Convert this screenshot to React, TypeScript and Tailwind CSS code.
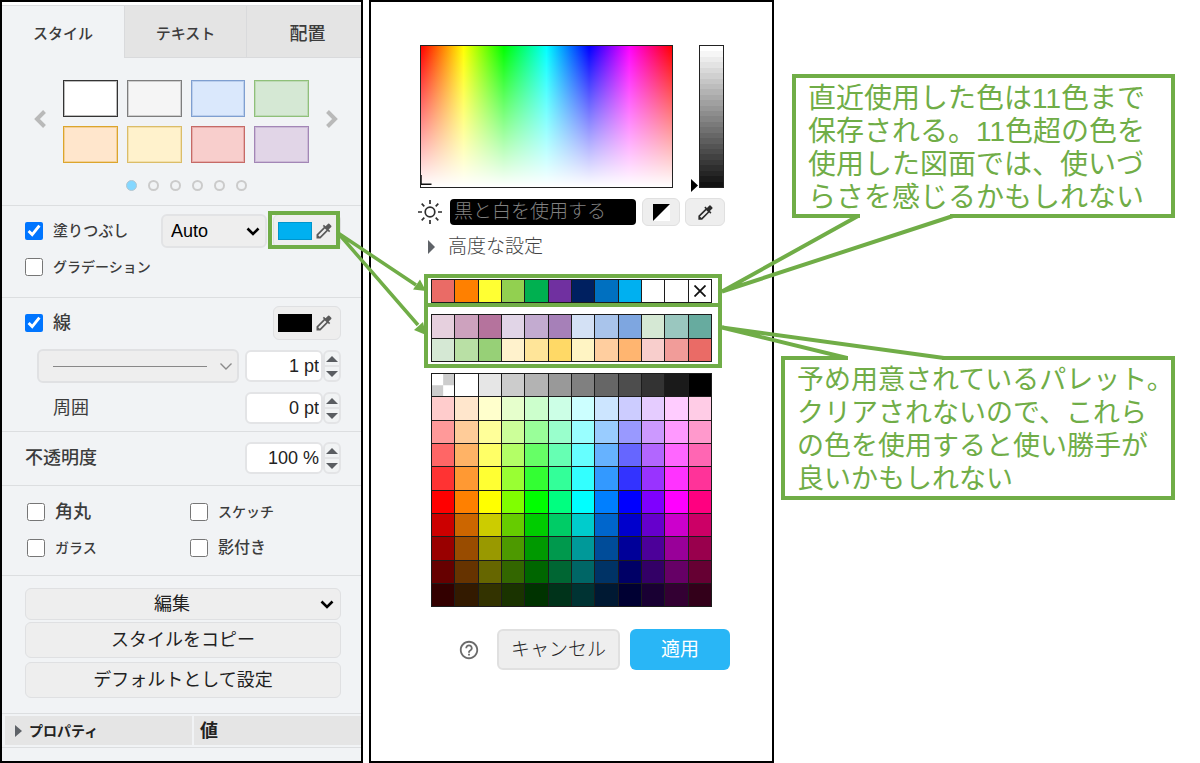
import React from "react";
import { MdHelpOutline } from "react-icons/md";

const STYLE_PRESETS = [
  { fill: "#ffffff", stroke: "#333333" },
  { fill: "#f5f5f5", stroke: "#7d7d7d" },
  { fill: "#dae8fc", stroke: "#7f9fd0" },
  { fill: "#d5e8d4", stroke: "#8fc07a" },
  { fill: "#ffe6cc", stroke: "#dca52c" },
  { fill: "#fff2cc", stroke: "#dbbd68" },
  { fill: "#f8cecc", stroke: "#c66a66" },
  { fill: "#e1d5e7", stroke: "#a386b6" },
];

const RECENT = "EA6B66 FF8000 FFFF33 92D050 00B050 7030A0 002060 0070C0 00B0F0 FFFFFF FFFFFF none".split(" ");

const PRESET = (
  "E6D0DE CDA2BE B5739D E1D5E7 C3ABD0 A680B8 D4E1F5 A9C4EB 7EA6E0 D5E8D4 9AC7BF 67AB9F " +
  "D5E8D4 B9E0A5 97D077 FFF2CC FFE599 FFD966 FFF4C3 FFCE9F FFB570 F8CECC F19C99 EA6B66"
).split(" ");

const DEFAULTS = (
  "clear FFFFFF E6E6E6 CCCCCC B3B3B3 999999 808080 666666 4D4D4D 333333 1A1A1A 000000 " +
  "FFCCCC FFE6CC FFFFCC E6FFCC CCFFCC CCFFE6 CCFFFF CCE5FF CCCCFF E5CCFF FFCCFF FFCCE6 " +
  "FF9999 FFCC99 FFFF99 CCFF99 99FF99 99FFCC 99FFFF 99CCFF 9999FF CC99FF FF99FF FF99CC " +
  "FF6666 FFB366 FFFF66 B3FF66 66FF66 66FFB3 66FFFF 66B2FF 6666FF B266FF FF66FF FF66B3 " +
  "FF3333 FF9933 FFFF33 99FF33 33FF33 33FF99 33FFFF 3399FF 3333FF 9933FF FF33FF FF3399 " +
  "FF0000 FF8000 FFFF00 80FF00 00FF00 00FF80 00FFFF 007FFF 0000FF 7F00FF FF00FF FF0080 " +
  "CC0000 CC6600 CCCC00 66CC00 00CC00 00CC66 00CCCC 0066CC 0000CC 6600CC CC00CC CC0066 " +
  "990000 994C00 999900 4D9900 009900 00994D 009999 004C99 000099 4C0099 990099 99004D " +
  "660000 663300 666600 336600 006600 006633 006666 003366 000066 330066 660066 660033 " +
  "330000 331A00 333300 1A3300 003300 00331A 003333 001933 000033 190033 330033 33001A"
).split(" ");

const BRIGHTNESS_STEPS = Array.from({ length: 26 }, (_, i) => 255 - Math.round((i * 237) / 25));

function Dropper({ className }: { className?: string }) {
  return (
    <svg viewBox="0 0 24 24" className={className} fill="currentColor" aria-hidden="true">
      <path d="M20.71 5.63l-2.34-2.34a.996.996 0 0 0-1.41 0l-3.12 3.12-1.93-1.91-1.41 1.41 1.42 1.42L3 16.25V21h4.75l8.92-8.92 1.42 1.42 1.41-1.41-1.92-1.92 3.12-3.12c.4-.4.4-1.03.01-1.42zM6.92 19L5 17.08l8.06-8.06 1.92 1.92L6.92 19z" />
    </svg>
  );
}

function Chevron({ className }: { className?: string }) {
  return (
    <svg viewBox="0 0 14 9" className={className} fill="none" stroke="currentColor" aria-hidden="true">
      <path d="M1.5 1.5 7 7l5.5-5.5" />
    </svg>
  );
}

function Check({ id, label, checked, className }: { id: string; label: string; checked?: boolean; className: string }) {
  return (
    <div className="flex items-center gap-[10px]">
      <input id={id} type="checkbox" defaultChecked={checked} className="size-[18px] accent-[#0075ff]" />
      <label htmlFor={id} className={"font-medium whitespace-nowrap " + className}>
        {label}
      </label>
    </div>
  );
}

function ColorButton({ label, color }: { label: string; color: string }) {
  return (
    <button
      type="button"
      aria-label={label}
      className="flex h-[34px] w-[68px] items-center gap-[2px] rounded-md border border-[#dfe0e2] bg-[#eeeeee] pl-1 text-[#5a5a5a]"
    >
      <span className="h-[18px] w-[34px] border border-black/15" style={{ backgroundColor: color }} />
      <Dropper className="size-[20px]" />
    </button>
  );
}

function Stepper({ label, value }: { label: string; value: string }) {
  return (
    <div className="flex h-8 w-24">
      <input
        aria-label={label}
        defaultValue={value}
        className="w-[78px] rounded-md border-2 border-[#e3e4e6] bg-white pr-[2px] text-right text-lg text-[#222222]"
      />
      <div className="flex flex-1 flex-col rounded-md border-2 border-[#e3e4e6] bg-[#f1f3f4]">
        <button type="button" aria-label={label + " +"} className="flex flex-1 items-center justify-center border-b-2 border-[#e3e4e6]">
          <svg viewBox="0 0 12 6" className="h-[6px] w-3" fill="#5a5d61">
            <path d="M0 6 6 0l6 6z" />
          </svg>
        </button>
        <button type="button" aria-label={label + " -"} className="flex flex-1 items-center justify-center">
          <svg viewBox="0 0 12 6" className="h-[6px] w-3" fill="#5a5d61">
            <path d="M0 0h12L6 6z" />
          </svg>
        </button>
      </div>
    </div>
  );
}

function Swatches({ colors, label }: { colors: string[]; label: string }) {
  return (
    <div role="group" aria-label={label} className="grid grid-cols-12 border-t border-l border-[#1c1c1c]">
      {colors.map((c, i) => (
        <button
          key={i}
          type="button"
          aria-label={c}
          className="flex aspect-square items-center justify-center border-r border-b border-[#1c1c1c]"
          style={c.length === 6 ? { backgroundColor: "#" + c } : undefined}
        >
          {c === "none" && (
            <svg viewBox="0 0 12 12" className="size-3" stroke="#111111" strokeWidth="1.8">
              <path d="M.5.5l11 11M11.500.5l-11 11" />
            </svg>
          )}
          {c === "clear" && (
            <svg viewBox="0 0 2 2" className="size-full" fill="#cccccc" preserveAspectRatio="none">
              <path d="M1 0h1v1H1zM0 1h1v1H0z" />
            </svg>
          )}
        </button>
      ))}
    </div>
  );
}

function FormatPanel() {
  const section = "border-b border-[#dcdee0] pl-[23px] pr-5";
  const wide = "rounded-md border border-[#dfe0e2] bg-[#eeeeee] text-lg leading-6 text-[#222222]";
  return (
    <section className="flex w-[363px] shrink-0 flex-col overflow-hidden border-2 border-black bg-[#f1f3f5] text-[#3c3c3c]">
      <div className="h-1 border-b border-[#dcdee0] bg-white" />
      <div role="tablist" className="grid h-13 grid-cols-[122px_122px_122px] font-medium">
        <button type="button" role="tab" aria-selected="true" className="pt-1 text-[15px] leading-5">
          スタイル
        </button>
        <button type="button" role="tab" aria-selected="false" className="border-b border-l border-[#d9dadc] bg-[#e4e4e4] pt-1 text-[15px] leading-5">
          テキスト
        </button>
        <button type="button" role="tab" aria-selected="false" className="border-b border-l border-[#d9dadc] bg-[#e4e4e4] pt-1 text-lg leading-5">
          配置
        </button>
      </div>

      <div className="border-b border-[#dcdee0] pt-[22px] pr-[22px] pb-[14px] pl-[31px]">
        <div className="flex items-center gap-4">
          <button type="button" aria-label="前へ" className="flex w-[14px] justify-center pb-[6px]">
            <svg viewBox="0 0 12 18" className="h-[18px] w-3" fill="none" stroke="#b9b9b9" strokeWidth="4">
              <path d="M10.5 1.5 3 9l7.5 7.5" />
            </svg>
          </button>
          <div className="grid w-[246px] grid-cols-4 gap-[9px]">
            {STYLE_PRESETS.map((s, i) => (
              <button
                key={i}
                type="button"
                aria-label={s.fill}
                className="h-[37px] border"
                style={{ backgroundColor: s.fill, borderColor: s.stroke, boxShadow: `inset 0 0 0 1px ${s.stroke}55` }}
              />
            ))}
          </div>
          <button type="button" aria-label="次へ" className="flex w-[14px] justify-center pb-[6px]">
            <svg viewBox="0 0 12 18" className="h-[18px] w-3" fill="none" stroke="#b9b9b9" strokeWidth="4">
              <path d="M1.5 1.5 9 9l-7.5 7.5" />
            </svg>
          </button>
        </div>
        <div className="mt-[17px] flex justify-center gap-[11px]">
          {[0, 1, 2, 3, 4, 5].map((i) => (
            <button
              key={i}
              type="button"
              aria-label={String(i + 1)}
              className={
                i === 0
                  ? "size-[11px] rounded-full border border-[#b4c6d0] bg-[#84d7ff]"
                  : "size-[11px] rounded-full border-2 border-[#cbcbcb]"
              }
            />
          ))}
        </div>
      </div>

      <div className={section + " pt-2 pb-[19px]"}>
        <div className="flex h-[34px] items-center justify-between">
          <Check id="fill" label="塗りつぶし" checked className="text-[15px] leading-5" />
          <div className="flex items-center gap-[6px]">
            <div className="relative">
              <select
                aria-label="塗りつぶしの種類"
                className="h-[34px] w-[106px] appearance-none rounded-md border-2 border-[#e2e3e5] bg-[#eeeeee] pl-2 text-lg leading-6 text-black"
              >
                <option>Auto</option>
              </select>
              <Chevron className="pointer-events-none absolute top-[13px] right-[7px] h-[9px] w-[14px] stroke-[2.6] text-black" />
            </div>
            <div className="relative">
              <ColorButton label="塗りつぶしの色" color="#00b0f0" />
              <div className="pointer-events-none absolute -top-[3px] right-px -bottom-px -left-[5px] border-4 border-[#70ad47]" />
            </div>
          </div>
        </div>
        <div className="mt-2 flex h-[22px] items-center">
          <Check id="gradient" label="グラデーション" className="text-sm leading-5" />
        </div>
      </div>

      <div className={section + " pt-2 pb-[7px]"}>
        <div className="flex items-center justify-between">
          <Check id="line" label="線" checked className="text-lg leading-5" />
          <ColorButton label="線の色" color="#000000" />
        </div>
        <div className="mt-[9px] flex items-center justify-between pl-3">
          <button
            type="button"
            aria-label="線のスタイル"
            className="flex h-[34px] w-[202px] items-center justify-between rounded-md border-2 border-[#e0e1e3] bg-[#eeeeee] pr-1 pl-[14px] text-[#8a8a8a]"
          >
            <span className="w-[154px] border-t border-[#888888]" />
            <Chevron className="h-[9px] w-[14px] stroke-[1.4]" />
          </button>
          <Stepper label="線の幅" value="1 pt" />
        </div>
        <div className="mt-[9px] flex items-center justify-between pl-7">
          <span className="text-lg leading-5 font-normal">周囲</span>
          <Stepper label="周囲" value="0 pt" />
        </div>
      </div>

      <div className={section + " flex items-center justify-between pt-[10px] pb-[11px]"}>
        <span className="text-lg leading-5 font-medium">不透明度</span>
        <Stepper label="不透明度" value="100 %" />
      </div>

      <div className={section + " pt-2 pb-[9px]"}>
        <div className="grid auto-rows-[36px] grid-cols-[163px_1fr] items-center pl-[2px]">
          <Check id="rounded" label="角丸" className="text-lg leading-5" />
          <Check id="sketch" label="スケッチ" className="text-sm leading-5" />
          <Check id="glass" label="ガラス" className="text-sm leading-5" />
          <Check id="shadow" label="影付き" className="text-base leading-5" />
        </div>
      </div>

      <div className={section + " flex flex-col pt-3 pb-[15px]"}>
        <div className="relative">
          <select aria-label="編集" className={wide + " h-8 w-full appearance-none pr-[22px] [text-align-last:center]"}>
            <option>編集</option>
          </select>
          <Chevron className="pointer-events-none absolute top-3 right-[7px] h-[9px] w-[14px] stroke-[2.6] text-black" />
        </div>
        <button type="button" className={wide + " mt-[2px] h-9"}>
          スタイルをコピー
        </button>
        <button type="button" className={wide + " mt-1 h-9"}>
          デフォルトとして設定
        </button>
      </div>

      <div className="border-b border-[#dcdee0] py-[2px] pl-[3px]">
        <table className="w-full text-left text-[#222222]">
          <thead>
            <tr className="h-[29px] bg-[#e5e5e5]">
              <th scope="col" className="w-[188px] border-r-2 border-[#f1f3f5] text-sm leading-5 font-bold">
                <span className="flex items-center gap-[7px] pl-[10px]">
                  <svg viewBox="0 0 7 12" className="h-3 w-[7px]" fill="#5f6368">
                    <path d="M0 0l7 6-7 6z" />
                  </svg>
                  プロパティ
                </span>
              </th>
              <th scope="col" className="pl-[6px] text-lg leading-5 font-bold">
                値
              </th>
            </tr>
          </thead>
        </table>
      </div>
    </section>
  );
}

function ColorDialog() {
  return (
    <section className="w-[405px] shrink-0 border-2 border-black bg-white pt-[43px]">
      <div className="pr-[47px] pl-[46px]">
        <div className="flex justify-between pr-px pl-[3px]">
          <div className="relative h-[143px] w-[253px] border border-[#222222] bg-[linear-gradient(to_bottom,transparent,#fff),linear-gradient(to_right,#f00,#ff0_17%,#0f0_33%,#0ff_50%,#00f_67%,#f0f_83%,#f00)]">
            <svg viewBox="0 0 11 12" className="absolute bottom-0 left-0 h-3 w-[11px]" fill="none" stroke="#111111" strokeWidth="1.5">
              <path d="M0 0v9.200H10.500" />
            </svg>
          </div>
          <div className="relative flex h-[143px] w-[25px] flex-col border border-[#222222]">
            {BRIGHTNESS_STEPS.map((v, i) => (
              <div key={i} className="flex-1" style={{ backgroundColor: `rgb(${v},${v},${v})` }} />
            ))}
            <input type="range" aria-label="明るさ" defaultValue={0} className="absolute inset-0 size-full opacity-0" />
            <svg viewBox="0 0 7 13" className="absolute -bottom-[5px] -left-[9px] h-[13px] w-[7px]">
              <path d="M0 0l7 6.500-7 6.500z" />
            </svg>
          </div>
        </div>

        <div className="mt-[10px] flex h-7 items-center">
          <svg viewBox="0 0 26 26" className="size-[26px] shrink-0" fill="none" stroke="#2e2e2e" strokeWidth="1.7" aria-hidden="true">
            <circle cx="13" cy="13" r="4.800" />
            <path d="M13 1v4M13 21v4M1 13h4M21 13h4M4.700 4.700l2.600 2.600M18.700 18.700l2.600 2.600M4.700 21.300l2.600-2.600M18.700 7.300l2.600-2.600" />
          </svg>
          <input
            aria-label="色"
            placeholder="黒と白を使用する"
            className="ml-[7px] h-[26px] min-w-0 flex-1 rounded-[4px] bg-black px-1 text-[19px] leading-6 font-light text-white placeholder:text-[#808080]"
          />
          <button type="button" aria-label="黒と白" className="ml-[6px] flex h-7 w-[38px] items-center justify-center rounded-md border border-[#e0e0e0] bg-[#eeeeee]">
            <svg viewBox="0 0 17 17" className="size-[17px]">
              <path d="M0 0h17v17H0z" fill="#fff" />
              <path d="M0 0h17L0 17z" />
            </svg>
          </button>
          <button type="button" aria-label="スポイト" className="ml-[5px] flex h-7 w-10 items-center justify-center rounded-md border border-[#e0e0e0] bg-[#eeeeee] text-[#2b2b2b]">
            <Dropper className="size-[19px]" />
          </button>
        </div>

        <button type="button" className="mt-[7px] flex h-7 items-center gap-[13px] pl-[11px] text-[19px] leading-6 font-light text-[#444444]">
          <svg viewBox="0 0 7 14" className="h-[14px] w-[7px]" fill="#5f6368">
            <path d="M0 0l7 7-7 7z" />
          </svg>
          高度な設定
        </button>

        <div className="mt-[18px] flex w-[295px] flex-col gap-[11px] pl-[14px]">
          <div className="relative">
            <Swatches label="最近使用した色" colors={RECENT} />
            <div className="pointer-events-none absolute -top-[5px] -right-[10px] -bottom-[4px] -left-[7px] border-4 border-[#70ad47]" />
          </div>
          <div className="relative">
            <Swatches label="プリセット" colors={PRESET} />
            <div className="pointer-events-none absolute -top-[11px] -right-[10px] -bottom-[6px] -left-[7px] border-4 border-[#70ad47]" />
          </div>
          <Swatches label="標準の色" colors={DEFAULTS} />
        </div>
      </div>

      <div className="mt-[22px] flex h-[41px] items-center justify-end gap-[10px] pr-[42px]">
        <button type="button" aria-label="ヘルプ" className="mr-[7px] text-[#6b6b6b]">
          <MdHelpOutline className="size-[22px]" />
        </button>
        <button type="button" className="h-full w-[123px] rounded-md border-2 border-[#e0e0e0] bg-[#eeeeee] text-[19px] leading-6 font-light text-[#222222]">
          キャンセル
        </button>
        <button type="button" className="h-full w-[100px] rounded-md bg-[#29b6f6] text-[19px] leading-6 text-white">
          適用
        </button>
      </div>
    </section>
  );
}

function Connectors() {
  return (
    <svg
      viewBox="0 0 1200 763"
      className="pointer-events-none absolute top-0 left-0 h-[763px] w-[1200px]"
      fill="none"
      stroke="#70ad47"
      strokeWidth="4"
      aria-hidden="true"
    >
      <g stroke="#ffffff" strokeWidth="5">
        <path d="M860 216H950M848 358H942" />
      </g>
      <path d="M858 216 722 291.500 953 216" />
      <path d="M847 358 722 327.500 944 358" />
      <path d="M338 233 416 285M338 233 418 325" strokeWidth="3.500" />
      <g fill="#70ad47" stroke="none">
        <path d="M426 291l-13-1.500 7-10z" />
        <path d="M426 335l-12-5 9-8z" />
      </g>
    </svg>
  );
}

export default function App() {
  const note = "border-4 border-[#70ad47] bg-white pt-1 pl-3 leading-[33px] whitespace-nowrap text-[#70ad47]";
  return (
    <main className="relative flex min-h-screen gap-[6px] bg-white font-['Liberation_Sans','Noto_Sans_CJK_JP',sans-serif]" lang="ja">
      <FormatPanel />
      <ColorDialog />
      <div className="flex min-w-0 flex-1 flex-col pt-[74px] pr-[25px]">
        <p className={note + " ml-3 text-[28px]"}>
          直近使用した色は11色まで
          <br />
          保存される。11色超の色を
          <br />
          使用した図面では、使いづ
          <br />
          らさを感じるかもしれない
        </p>
        <p className={note + " mt-[138px] ml-px text-[27px]"}>
          予め用意されているパレット。
          <br />
          クリアされないので、これら
          <br />
          の色を使用すると使い勝手が
          <br />
          良いかもしれない
        </p>
      </div>
      <Connectors />
    </main>
  );
}
